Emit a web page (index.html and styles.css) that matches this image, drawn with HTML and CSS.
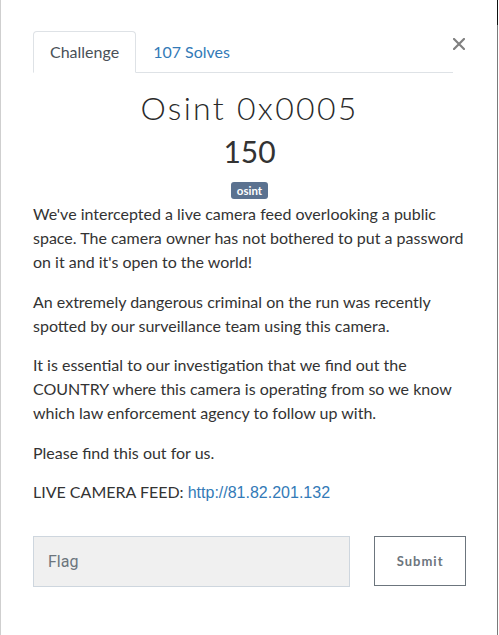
FILE: index.html
```html
<!DOCTYPE html>
<html>
<head>
<meta charset="utf-8">
<link rel="stylesheet" href="styles.css">
</head>
<body>
<div class="modal">
  <div class="modal-body">
    <div class="header">
      <nav class="tabs">
        <span class="tab active">Challenge</span>
        <span class="tab link">107 Solves</span>
      </nav>
      <span class="close"><svg width="12" height="12" viewBox="0 0 12 12"><path d="M1 1L11 11M11 1L1 11" stroke="#808080" stroke-width="2.2" stroke-linecap="square"/></svg></span>
    </div>
    <h3 class="name">Osint 0x0005</h3>
    <h4 class="value">150</h4>
    <div class="tags"><span class="badge">osint</span></div>
    <div class="desc">
      <p>We've intercepted a live camera feed overlooking a public space. The camera owner has not bothered to put a password on it and it's open to the world!</p>
      <p>An extremely dangerous criminal on the run was recently spotted by our surveillance team using this camera.</p>
      <p>It is essential to our investigation that we find out the COUNTRY where this camera is operating from so we know which law enforcement agency to follow up with.</p>
      <p>Please find this out for us.</p>
      <p>LIVE CAMERA FEED: <a class="url">http://81.82.201.132</a></p>
    </div>
    <div class="submit-row">
      <div class="flag">Flag</div>
      <div class="btn">Submit</div>
    </div>
  </div>
</div>
</body>
</html>
```
FILE: styles.css
```css
html, body {
  margin: 0;
  padding: 0;
  background: #fff;
}
.modal {
  position: relative;
  width: 498px;
  height: 635px;
  box-sizing: border-box;
  border-left: 1px solid #cfcfcf;
  border-right: 1px solid #7a7a7a;
  font-family: Lato, "Noto Sans", sans-serif;
  color: #333;
}
.modal::after {
  content: "";
  position: absolute;
  right: -1px;
  top: 0;
  width: 1px;
  height: 25px;
  background: #111;
}
.modal-body {
  padding: 31px 31px 0 32px;
}
.header {
  display: flex;
  align-items: flex-start;
  justify-content: space-between;
}
.tabs {
  display: flex;
  width: 420px;
  border-bottom: 1px solid #dee2e6;
}
.tab {
  display: block;
  padding: 8px 16px;
  font-size: 16px;
  line-height: 24px;
  border: 1px solid transparent;
  border-top-left-radius: 4px;
  border-top-right-radius: 4px;
  margin-bottom: -1px;
}
.tab.active {
  color: #495057;
  border-color: #dee2e6 #dee2e6 #fff;
  background: #fff;
}
.tab.link {
  color: #337ab7;
}
.close {
  display: block;
  margin-top: 7px;
  margin-right: 1px;
  line-height: 0;
}
.name {
  margin: 16px 0 0;
  text-align: center;
  font-weight: 300;
  font-size: 32px;
  line-height: 38px;
  letter-spacing: 2.3px;
  color: #2a2a2a;
}
.value {
  margin: 6px 0 0;
  text-align: center;
  font-weight: 400;
  font-size: 30px;
  line-height: 36px;
  color: #333;
}
.tags {
  display: flex;
  justify-content: center;
  margin-top: 13px;
  margin-bottom: 3px;
}
.badge {
  display: block;
  background: #5b7290;
  color: #fff;
  font-size: 11.5px;
  font-weight: 700;
  line-height: 13px;
  padding: 2px 6px;
  border-radius: 3px;
}
.desc p {
  margin: 0 0 15.5px;
  font-size: 16px;
  line-height: 24px;
}
.url {
  color: #337ab7;
  font-family: "Liberation Sans", Arial, sans-serif;
}
.submit-row {
  display: flex;
  gap: 24px;
  margin-top: 31px;
}
.flag {
  width: 318px;
  height: 51px;
  box-sizing: border-box;
  background: #f0f0f0;
  border: 1px solid #ced6de;
  padding-left: 14px;
  font-family: Roboto, "Liberation Sans", sans-serif;
  font-size: 16px;
  line-height: 49px;
  color: #6c757d;
}
.btn {
  width: 92px;
  height: 50px;
  box-sizing: border-box;
  border: 1px solid #6c757d;
  text-align: center;
  font-size: 13px;
  font-weight: 700;
  letter-spacing: 1px;
  line-height: 48px;
  color: #6c757d;
}
```
